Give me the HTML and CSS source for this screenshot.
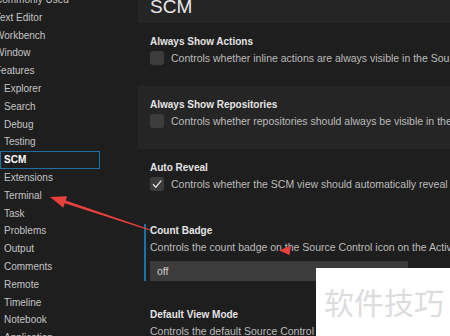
FILE: index.html
```html
<!doctype html>
<html lang="en">
  <head>
    <meta charset="UTF-8" />
    <meta name="viewport" content="width=device-width, initial-scale=1.0" />
    <title>Settings - SCM</title>
    <link rel="stylesheet" href="styles.css">
  </head>
  <body>
    <div class="page">
      <nav class="toc">
        <div class="toc-item top">Commonly Used</div>
        <div class="toc-item top">Text Editor</div>
        <div class="toc-item top">Workbench</div>
        <div class="toc-item top">Window</div>
        <div class="toc-item top">Features</div>
        <div class="toc-item">Explorer</div>
        <div class="toc-item">Search</div>
        <div class="toc-item">Debug</div>
        <div class="toc-item">Testing</div>
        <div class="toc-item active">SCM</div>
        <div class="toc-item">Extensions</div>
        <div class="toc-item">Terminal</div>
        <div class="toc-item">Task</div>
        <div class="toc-item">Problems</div>
        <div class="toc-item">Output</div>
        <div class="toc-item">Comments</div>
        <div class="toc-item">Remote</div>
        <div class="toc-item">Timeline</div>
        <div class="toc-item">Notebook</div>
        <div class="toc-item">Application</div>
      </nav>

      <main class="settings">
        <div class="settings-header">SCM</div>

        <div class="setting">
          <div class="setting-body">
            <div class="setting-title">Always Show Actions</div>
            <div class="setting-check">
              <span class="checkbox"></span>
              <span class="setting-desc">Controls whether inline actions are always visible in the Source Control view.</span>
            </div>
          </div>
        </div>

        <div class="setting hover">
          <div class="setting-body">
            <div class="setting-title">Always Show Repositories</div>
            <div class="setting-check">
              <span class="checkbox"></span>
              <span class="setting-desc">Controls whether repositories should always be visible in the SCM view.</span>
            </div>
          </div>
        </div>

        <div class="setting">
          <div class="setting-body">
            <div class="setting-title">Auto Reveal</div>
            <div class="setting-check">
              <span class="checkbox">
                <svg width="14" height="14" viewBox="0 0 14 14"><path d="M3 7.3 L5.8 10.2 L11.2 3.6" fill="none" stroke="#e2e2e2" stroke-width="1.3"/></svg>
              </span>
              <span class="setting-desc">Controls whether the SCM view should automatically reveal and select files when opening them.</span>
            </div>
          </div>
        </div>

        <div class="setting focused tall">
          <div class="setting-body">
            <div class="setting-title">Count Badge</div>
            <div class="setting-desc block">Controls the count badge on the Source Control icon on the Activity Bar.</div>
            <div class="select">off</div>
          </div>
        </div>

        <div class="setting">
          <div class="setting-body">
            <div class="setting-title">Default View Mode</div>
            <div class="setting-desc block">Controls the default Source Control repository view mode.</div>
          </div>
        </div>
      </main>
    </div>

    <svg class="annotations" width="450" height="336" viewBox="0 0 450 336">
      <polygon points="150.2,229.4 65.7,200.5 67.1,196.3 50,197 63.3,207.7 64.7,203.3 149.8,230.6" fill="#e8403a"/>
      <polygon points="279,250.5 291,245.5 289.5,255" fill="#e8403a"/>
    </svg>

    <div class="watermark">软件技巧</div>
  </body>
</html>
```

FILE: styles.css
```css
body {
  margin: 0;
  background-color: #1e1e1e;
  font-family: "Liberation Sans", Arial, sans-serif;
  overflow: hidden;
  height: 336px;
  position: relative;
}

.page {
  display: flex;
  height: 336px;
  overflow: hidden;
}

.toc {
  width: 100px;
  flex: none;
  margin-right: 38px;
  margin-top: -9px;
}

.toc-item {
  box-sizing: border-box;
  height: 17.8px;
  line-height: 16.4px;
  border: 1px solid transparent;
  padding-left: 3px;
  font-size: 10px;
  color: #c4c4c4;
  white-space: nowrap;
}

.toc-item.top {
  padding-left: 0;
  text-indent: -6px;
}

.toc-item.active {
  border-color: #1f6fa3;
  color: #ffffff;
  font-weight: bold;
}

.settings {
  flex: 1;
  min-width: 0;
  overflow: hidden;
  white-space: nowrap;
}

.settings-header {
  height: 23px;
  background-color: #252526;
  padding-left: 12px;
  font-size: 19px;
  line-height: 13px;
  color: #e8e8e8;
  overflow: hidden;
}

.setting {
  box-sizing: border-box;
  height: 63px;
  padding: 12px 0 0 6px;
}

.setting.tall {
  height: 84px;
}

.setting.hover {
  background-color: #252526;
}

.setting-body {
  border-left: 2px solid transparent;
  padding-left: 4px;
}

.setting.focused .setting-body {
  border-left-color: #1a73a8;
}

.setting-title {
  font-size: 10px;
  font-weight: bold;
  line-height: 13px;
  color: #e4e4e4;
}

.setting-check {
  display: flex;
  align-items: center;
  gap: 7px;
  height: 14px;
  margin-top: 3px;
}

.checkbox {
  width: 14px;
  height: 14px;
  flex: none;
  background-color: #3c3c3c;
  border-radius: 3px;
}

.checkbox svg {
  display: block;
}

.setting-desc {
  font-size: 10.5px;
  line-height: 13px;
  color: #bcbcbc;
}

.setting-desc.block {
  display: block;
  margin-top: 3.5px;
}

.select {
  width: 251px;
  height: 20px;
  margin-top: 7.5px;
  padding-left: 7px;
  background-color: #3c3c3c;
  font-size: 10.5px;
  line-height: 20px;
  color: #d0d0d0;
}

.annotations {
  position: absolute;
  top: 0;
  left: 0;
  pointer-events: none;
}

.watermark {
  position: absolute;
  left: 316px;
  top: 268px;
  right: 0;
  bottom: 0;
  box-sizing: border-box;
  padding: 14px 0 0 8px;
  background-color: #ffffff;
  font-family: "Noto Sans CJK SC", sans-serif;
  font-size: 30px;
  line-height: 38px;
  color: #dcdcdc;
  white-space: nowrap;
}
```
